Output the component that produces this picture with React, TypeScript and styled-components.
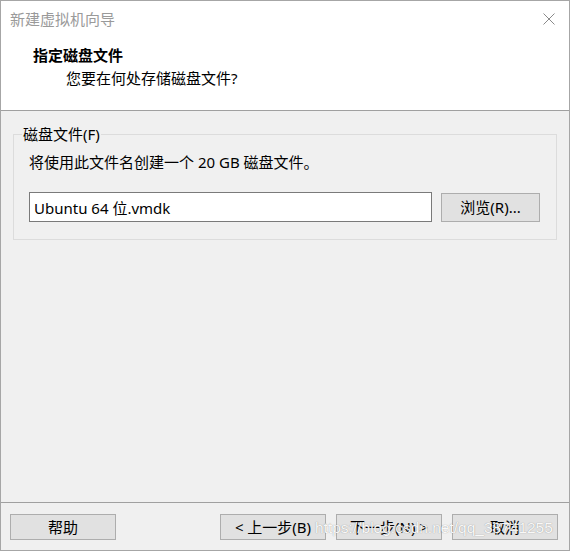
import React from "react";
import styled, { createGlobalStyle } from "styled-components";

const Global = createGlobalStyle`
  html, body { margin: 0; padding: 0; background: #ffffff; }
  * { box-sizing: border-box; }
`;

const FONT = `"Noto Sans", "Noto Sans CJK SC", sans-serif`;

const Window = styled.div`
  position: relative;
  width: 570px;
  height: 551px;
  border: 1px solid #a6a6a6;
  background: #f0f0f0;
  display: flex;
  flex-direction: column;
  font-family: ${FONT};
  font-size: 15px;
  color: #000;
  overflow: hidden;
`;

const TitleBar = styled.div`
  height: 36px;
  background: #fff;
  display: flex;
  align-items: center;
  justify-content: space-between;
  padding: 0 14px 0 9px;
`;

const TitleText = styled.span`
  color: #9a9a9a;
  font-size: 15px;
  line-height: 20px;
`;

const Close = styled.svg`
  width: 12px;
  height: 12px;
  display: block;
`;

const Header = styled.div`
  height: 74px;
  background: #fff;
  border-bottom: 1px solid #a0a0a0;
  padding: 8px 0 0 32px;
`;

const Heading = styled.div`
  font-weight: 700;
  line-height: 20px;
`;

const SubHeading = styled.div`
  margin: 3px 0 0 33px;
  line-height: 20px;
`;

const Content = styled.div`
  flex: 1;
  padding: 15px 12px 0 12px;
`;

const Group = styled.fieldset`
  margin: 0;
  padding: 0 16px 17px 15px;
  border: 1px solid #dcdcdc;
  min-width: 0;
`;

const Legend = styled.legend`
  margin-left: -7px;
  padding: 0 1px;
  line-height: 16px;
`;

const Description = styled.div`
  margin-top: 10px;
  line-height: 20px;
`;

const Row = styled.div`
  margin-top: 20px;
  display: flex;
  align-items: center;
  gap: 9px;
`;

const TextInput = styled.input`
  flex: 1;
  height: 30px;
  border: 1px solid #7a7a7a;
  background: #fff;
  padding: 0 4px;
  font-family: ${FONT};
  font-size: 15px;
  color: #000;
  outline: none;
`;

const Button = styled.button<{ $w?: number }>`
  width: ${(p) => p.$w ?? 106}px;
  height: ${(p) => (p.$w ? 29 : 26)}px;
  border: 1px solid #adadad;
  background: #e1e1e1;
  font-family: ${FONT};
  font-size: 15px;
  line-height: 20px;
  color: #000;
  padding: 0;
  display: flex;
  align-items: center;
  justify-content: center;
`;

const Footer = styled.div`
  border-top: 1px solid #a0a0a0;
  padding: 11px 11px 10px 9px;
  display: flex;
  align-items: center;
`;

const Spacer = styled.div`
  flex: 1;
`;

const NavGroup = styled.div`
  display: flex;
  gap: 10px;
`;

const Watermark = styled.div`
  position: absolute;
  left: 314px;
  top: 517px;
  font-family: "Liberation Sans", Arial, sans-serif;
  font-size: 15.5px;
  line-height: 20px;
  color: rgba(255, 255, 255, 0.95);
  text-shadow: 0 0 1px rgba(60, 60, 60, 0.55);
  pointer-events: none;
  white-space: nowrap;
`;

export default function App() {
  return (
    <>
      <Global />
      <Window>
        <TitleBar>
          <TitleText>新建虚拟机向导</TitleText>
          <Close viewBox="0 0 12 12">
            <path d="M0.5 0.5 L11.5 11.5 M11.5 0.5 L0.5 11.5" stroke="#8a8a8a" strokeWidth="1" fill="none" />
          </Close>
        </TitleBar>
        <Header>
          <Heading>指定磁盘文件</Heading>
          <SubHeading>您要在何处存储磁盘文件?</SubHeading>
        </Header>
        <Content>
          <Group>
            <Legend>磁盘文件(F)</Legend>
            <Description>将使用此文件名创建一个 20 GB 磁盘文件。</Description>
            <Row>
              <TextInput defaultValue="Ubuntu 64 位.vmdk" />
              <Button $w={99}>浏览(R)...</Button>
            </Row>
          </Group>
        </Content>
        <Footer>
          <Button>帮助</Button>
          <Spacer />
          <NavGroup>
            <Button>&lt; 上一步(B)</Button>
            <Button>下一步(N) &gt;</Button>
            <Button>取消</Button>
          </NavGroup>
        </Footer>
        <Watermark>https://blog.csdn.net/qq_38741255</Watermark>
      </Window>
    </>
  );
}
